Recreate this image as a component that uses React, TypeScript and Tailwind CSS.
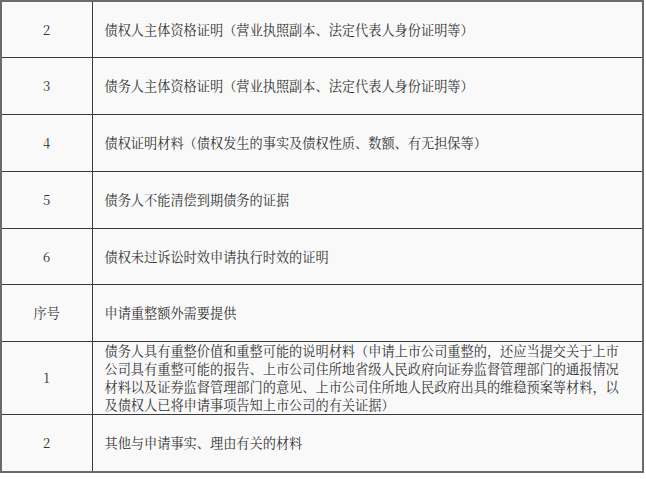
const rows: { no: string; text: React.ReactNode; tall?: boolean }[] = [
  { no: "2", text: "债权人主体资格证明（营业执照副本、法定代表人身份证明等）" },
  { no: "3", text: "债务人主体资格证明（营业执照副本、法定代表人身份证明等）" },
  { no: "4", text: "债权证明材料（债权发生的事实及债权性质、数额、有无担保等）" },
  { no: "5", text: "债务人不能清偿到期债务的证据" },
  { no: "6", text: "债权未过诉讼时效申请执行时效的证明" },
  { no: "序号", text: "申请重整额外需要提供" },
  {
    no: "1",
    tall: true,
    text: (
      <>
        债务人具有重整价值和重整可能的说明材料（申请上市公司重整的，还应当提交关于上市
        <br />
        公司具有重整可能的报告、上市公司住所地省级人民政府向证券监督管理部门的通报情况
        <br />
        材料以及证券监督管理部门的意见、上市公司住所地人民政府出具的维稳预案等材料，以
        <br />
        及债权人已将申请事项告知上市公司的有关证据）
      </>
    ),
  },
  { no: "2", text: "其他与申请事实、理由有关的材料" },
];

export default function App() {
  return (
    <div
      className="min-h-screen bg-white text-[#333] text-[13.2px]"
      style={{ fontFamily: '"Noto Serif CJK SC", "Liberation Serif", "Noto Sans CJK SC", serif' }}
    >
      <table className="w-[644px] border-collapse bg-[#f9f9f9] border-2 border-[#6b6b6b]">
        <tbody>
          {rows.map((r, i) => (
            <tr key={i} className={r.tall ? "h-[73px]" : "h-[56.8px]"}>
              <td className="w-[91px] border border-[#3a3a3a] text-center align-middle leading-[18px]">
                {r.no}
              </td>
              <td className="border border-[#3a3a3a] pl-[12px] pr-[4px] align-middle whitespace-nowrap leading-[18px]">
                {r.text}
              </td>
            </tr>
          ))}
        </tbody>
      </table>
    </div>
  );
}
